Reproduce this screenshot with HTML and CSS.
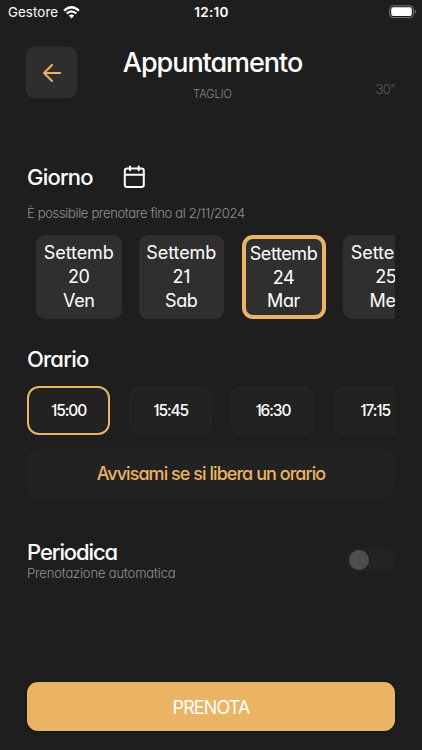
FILE: index.html
```html
<!DOCTYPE html>
<html lang="it">
<head>
<meta charset="utf-8">
<meta name="viewport" content="width=device-width, initial-scale=1">
<title>Appuntamento</title>
<link rel="stylesheet" href="styles.css">
</head>
<body>
<div class="status">
  <div class="carrier"><span>Gestore</span>
    <svg width="17" height="13" viewBox="0 0 17 13" fill="none" stroke="#fff" stroke-width="2.2"><path d="M1 4.8Q8.5-2.3 16 4.8M3.7 7.5Q8.500 3.100 13.300 7.500"/><path d="M5.800 9.500Q8.500 7.300 11.200 9.500L8.500 12.400Z" fill="#fff" stroke="none"/></svg>
  </div>
  <span class="clock">12:10</span>
  <svg class="battery" width="28" height="14" viewBox="0 0 28 14"><rect x=".6" y=".8" width="23.800" height="11.800" rx="3.500" fill="none" stroke="#77777a"/><rect x="2.200" y="2.300" width="20.600" height="8.800" rx="2" fill="#fff"/><path d="M25.800 4.500Q28.400 6.700 25.800 8.900Z" fill="#77777a"/></svg>
</div>
<header class="header">
  <button class="back" aria-label="Indietro"><svg width="20" height="20" viewBox="0 0 20 20" fill="none" stroke="#eab464" stroke-width="2" stroke-linecap="round" stroke-linejoin="round"><path d="M18.200 10H2M10 2L2 10L10 18"/></svg></button>
  <div class="heading"><h1>Appuntamento</h1><p>TAGLIO</p></div>
  <span class="duration">30"</span>
</header>
<main>
  <div class="day-title"><h2 class="giorno">Giorno</h2>
    <svg width="23" height="24" viewBox="0 0 23 24" fill="none" stroke="#fff" stroke-width="2" stroke-linecap="round" stroke-linejoin="round"><rect x="1.800" y="3.500" width="19" height="18.600" rx="2.300"/><path d="M2 9.700H20.800M7 1.500V5.300M15.700 1.500V5.300"/></svg>
  </div>
  <p class="hint">È possibile prenotare fino al 2/11/2024</p>
  <div class="days">
    <div class="day"><span>Settemb</span><b>20</b><b>Ven</b></div>
    <div class="day"><span>Settemb</span><b>21</b><b>Sab</b></div>
    <div class="day selected"><span>Settemb</span><b>24</b><b>Mar</b></div>
    <div class="day"><span>Settemb</span><b>25</b><b>Mer</b></div>
  </div>
  <h2 class="orario">Orario</h2>
  <div class="times">
    <div class="time selected">15:00</div>
    <div class="time">15:45</div>
    <div class="time">16:30</div>
    <div class="time">17:15</div>
  </div>
  <button class="notify">Avvisami se si libera un orario</button>
  <div class="periodic">
    <div><h2 class="periodica">Periodica</h2><p>Prenotazione automatica</p></div>
    <div class="toggle"><i></i></div>
  </div>
  <button class="book">PRENOTA</button>
</main>
</body>
</html>
```
FILE: styles.css
```css
* { box-sizing: border-box; }
body { margin: 0; height: 750px; overflow: hidden; background: #1e1e1e; color: #fff; font-family: Inter, "Open Sans", sans-serif; font-feature-settings: "cv11", "cv01"; }
h1, h2, p { margin: 0; font-weight: 500; }
button { padding: 0; border: 0; font: inherit; font-feature-settings: inherit; }
svg { display: block; flex: none; }
.status { height: 24px; padding: 0 5px 0 8px; display: grid; grid-template-columns: 1fr auto 1fr; align-items: center; font-size: 13.3px; font-feature-settings: normal; }
.carrier { display: flex; align-items: center; gap: 5px; letter-spacing: .1px; }
.clock { font-weight: 600; font-size: 13.5px; letter-spacing: .3px; margin-right: 2px; }
.battery { justify-self: end; }
.header { height: 74px; margin: 23px 27px 0 26px; display: grid; grid-template-columns: 52px 1fr 52px; align-items: start; }
.back { width: 51px; height: 51px; border-radius: 9px; background: #2e2e2e; box-shadow: 0 0 3px #2b2b2b; display: grid; place-items: center; }
.heading { text-align: center; padding-left: 4px; white-space: nowrap; }
h1 { font-size: 27px; line-height: 32px; letter-spacing: -1.050px; }
.heading p { margin-top: 7px; font-size: 11px; line-height: 16px; font-weight: 300; color: #8c8c8c; letter-spacing: 0; }
.duration { justify-self: end; margin-top: 33px; font-size: 13px; line-height: 18px; font-weight: 300; color: #5c5c5c; letter-spacing: -.7px; }
main { margin: 0 27px; padding-top: 42px; }
h2 { font-size: 22px; line-height: 28px; letter-spacing: -.8px; }
.day-title { height: 28px; display: flex; justify-content: space-between; align-items: center; width: 119px; }
.hint { margin-top: 12px; font-size: 13px; line-height: 20px; font-weight: 300; color: #929292; letter-spacing: -.34px; white-space: nowrap; }
.days { margin-top: 12px; display: flex; gap: 17px; padding-left: 9px; overflow: hidden; height: 84px; }
.day { flex: 0 0 85.500px; height: 84px; padding: 6px 4px; border-radius: 9px; background: #2f2f2f; font-size: 18px; line-height: 24px; text-align: center; }
.day span { display: block; white-space: nowrap; letter-spacing: -.1px; }
.day b { display: block; font-weight: 400; letter-spacing: -.4px; }
.day.selected { flex-basis: 84px; margin: 0 .5px; border: 4px solid #eab464; padding: 3px 4px; border-radius: 11px; line-height: 23.500px; }
.day.selected span { letter-spacing: -.4px; }
.orario { margin-top: 26px; }
.periodica { letter-spacing: -1.1px; }
.times { margin-top: 13px; display: flex; gap: 19.200px; height: 49px; overflow: hidden; }
.time { flex: 0 0 83px; height: 49px; border: 2px solid #242424; border-radius: 12px; background: #222; display: grid; place-items: center; font-size: 15.500px; font-weight: 500; letter-spacing: -1.100px; }
.time.selected { border-color: #eab464; }
.notify { display: block; width: 100%; height: 49px; margin-top: 14px; border-radius: 11px; background: #222; color: #eab464; font-size: 18px; font-weight: 500; letter-spacing: -.950px; }
.periodic { margin-top: 40px; height: 44px; display: flex; justify-content: space-between; }
.periodic p { margin-top: -2px; font-size: 13px; line-height: 18px; font-weight: 300; color: #929292; letter-spacing: -.15px; }
.toggle { width: 49px; height: 23px; margin-top: 10px; padding: 1.500px 3px; border-radius: 12px; background: #232323; }
.toggle i { display: block; width: 20px; height: 20px; border-radius: 50%; background: #4e4e4e; }
.book { display: block; width: 100%; height: 49px; margin-top: 100px; padding-top: 1px; border-radius: 11px; background: #eab464; color: #fff; font-size: 18px; letter-spacing: -.9px; box-shadow: 0 0 3px #111; }
```
